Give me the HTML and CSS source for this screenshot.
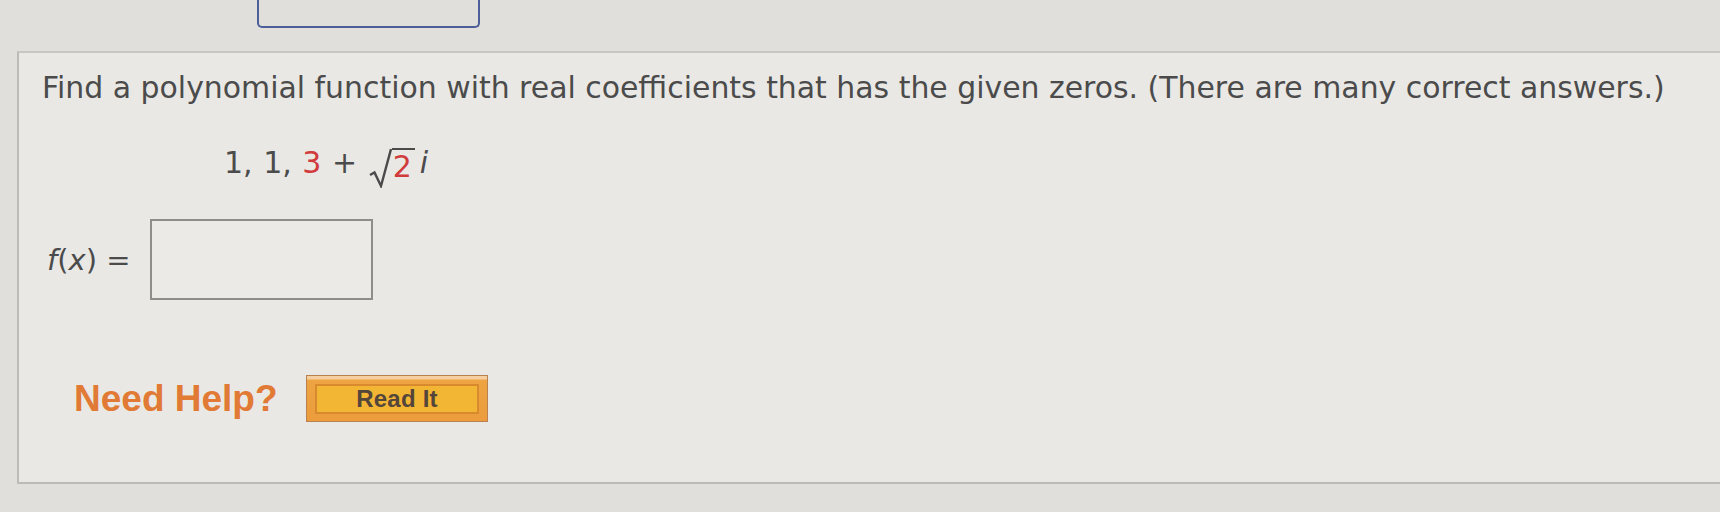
FILE: index.html
```html
<!DOCTYPE html>
<html>
<head>
<meta charset="utf-8">
<link rel="stylesheet" href="styles.css">
</head>
<body>
<div class="top">
  <div class="prev-box"></div>
</div>
<div class="panel">
  <p class="question">Find a polynomial function with real coefficients that has the given zeros. (There are many correct answers.)</p>
  <p class="zeros">1, 1, <span class="red">3</span> + <span class="sqrt"><svg class="rad" width="24" height="40" viewBox="0 0 24 40"><path d="M2 27 L6.5 24.5 L13 38 L23 1" fill="none" stroke="#4b4b4b" stroke-width="2.4" stroke-linejoin="miter"/></svg><span class="radicand red">2</span></span><i class="imag">i</i></p>
  <div class="answer">
    <span class="fx"><i>f</i>(<i>x</i>) =</span>
    <span class="input"></span>
  </div>
  <div class="help">
    <span class="need">Need Help?</span>
    <span class="btn"><span class="btn-inner">Read It</span></span>
  </div>
</div>
</body>
</html>
```

FILE: styles.css
```css
html, body {
  margin: 0;
  padding: 0;
}
body {
  background: #e0dfdb;
  width: 1720px;
  height: 512px;
  overflow: hidden;
  font-family: "DejaVu Sans", Verdana, sans-serif;
  color: #4b4b4b;
}
.top {
  height: 51px;
  padding-left: 257px;
}
.prev-box {
  width: 219px;
  height: 26px;
  border: 2px solid #4d5f98;
  border-top: none;
  border-radius: 0 0 5px 5px;
}
.panel {
  margin-left: 17px;
  height: 429px;
  background: #e9e8e5;
  border-top: 2px solid #c9c7c3;
  border-left: 2px solid #bdbbb7;
  border-bottom: 2px solid #bdbbb7;
  padding-left: 23px;
}
.question {
  margin: 0;
  padding-top: 17px;
  font-size: 29.9px;
  line-height: 36px;
  white-space: nowrap;
}
.zeros {
  margin: 0;
  padding-left: 182px;
  padding-top: 36px;
  font-size: 30px;
  line-height: 42px;
  display: flex;
  align-items: flex-end;
  white-space: pre;
  word-spacing: 1px;
}
.red {
  color: #d13b3b;
}
.sqrt {
  display: inline-flex;
  align-items: flex-end;
}
.rad {
  display: block;
  margin-bottom: -4px;
}
.radicand {
  border-top: 2px solid #4b4b4b;
  line-height: 34px;
  padding: 0 3px 0 1px;
}
.imag {
  padding-left: 5px;
}
.answer {
  display: flex;
  align-items: center;
  margin-top: 35px;
}
.fx {
  font-size: 29px;
  padding-left: 5px;
  width: 103px;
  white-space: pre;
}
.input {
  display: block;
  width: 219px;
  height: 77px;
  border: 2px solid #8e8d8a;
  background: #ebeae7;
}
.help {
  display: flex;
  align-items: center;
  margin-top: 75px;
}
.need {
  font-family: "Liberation Sans", Arial, sans-serif;
  font-weight: bold;
  font-size: 37px;
  color: #e17a35;
  padding-left: 32px;
  width: 232px;
}
.btn {
  display: block;
  box-sizing: border-box;
  width: 182px;
  height: 47px;
  border: 1px solid #b98050;
  background: linear-gradient(#f6cfa0 0, #f6cfa0 3px, #eea442 4px, #ec9c3c 100%);
  padding: 8px 8px 7px 8px;
}
.btn-inner {
  display: flex;
  align-items: center;
  justify-content: center;
  box-sizing: border-box;
  height: 100%;
  border: 2px solid #d98a2e;
  background: #f3b534;
  font-family: "Liberation Sans", Arial, sans-serif;
  font-weight: bold;
  font-size: 24px;
  color: #54463a;
  letter-spacing: 0.2px;
}
```
